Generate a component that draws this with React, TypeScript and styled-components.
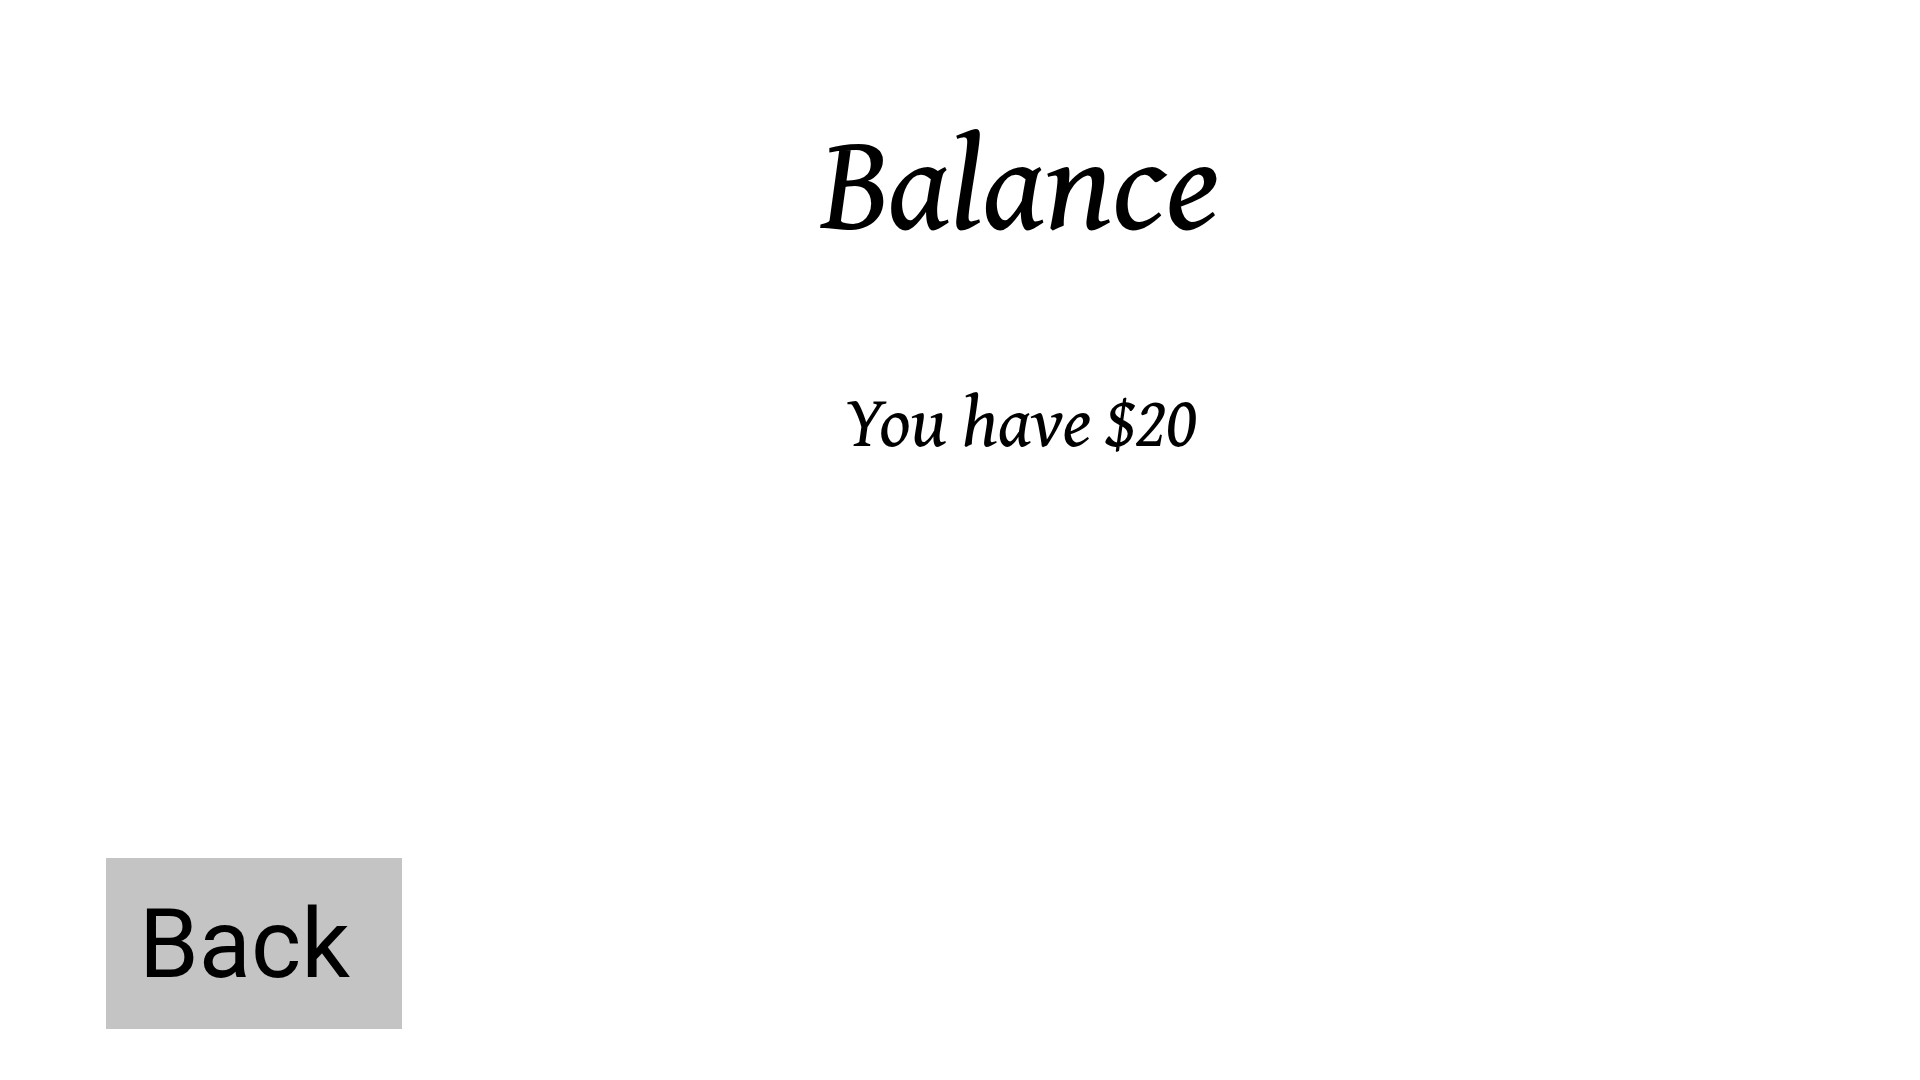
import React from "react";
import styled, { createGlobalStyle } from "styled-components";

const GlobalStyle = createGlobalStyle`
  html, body { margin: 0; padding: 0; background: #ffffff; }
  #root { min-height: 100vh; }
`;

const Page = styled.div`
  height: 1080px;
  display: flex;
  flex-direction: column;
  box-sizing: border-box;
`;

const Content = styled.main`
  flex: 1;
  display: flex;
  flex-direction: column;
  align-items: center;
  padding: 112px 0 0 120px;
`;

const Title = styled.h1`
  margin: 0;
  font-family: "Gentium Book Plus", "Gentium Plus", "Noto Serif", serif;
  font-style: italic;
  font-weight: 400;
  font-size: 134px;
  line-height: 1;
  color: #000;
`;

const Amount = styled.p`
  margin: 138px 0 0;
  font-family: "Gentium Book Plus", "Gentium Plus", "Noto Serif", serif;
  font-style: italic;
  font-weight: 400;
  font-size: 72px;
  line-height: 1;
  color: #000;
`;

const Footer = styled.footer`
  display: flex;
  padding: 0 0 51px 106px;
`;

const BackButton = styled.button`
  width: 296px;
  height: 171px;
  border: none;
  margin: 0;
  background: #c4c4c4;
  font-family: Roboto, "Liberation Sans", sans-serif;
  font-size: 96px;
  color: #000;
  text-align: left;
  padding: 0 0 0 33px;
  cursor: pointer;
`;

export default function App() {
  return (
    <>
      <GlobalStyle />
      <Page>
        <Content>
          <Title>Balance</Title>
          <Amount>You have $20</Amount>
        </Content>
        <Footer>
          <BackButton>Back</BackButton>
        </Footer>
      </Page>
    </>
  );
}
